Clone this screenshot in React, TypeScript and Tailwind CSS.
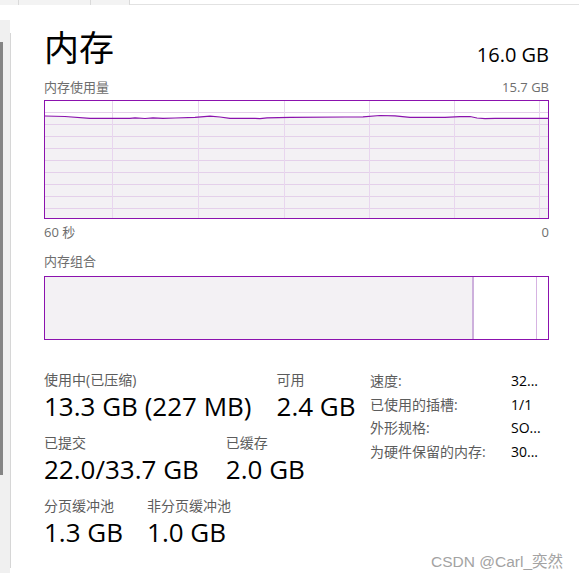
import React from "react";

const pts: [number, number][] = [
  [0, 15], [20, 15.5], [45, 17.3], [85, 17.3], [90, 16.8], [100, 17.5], [108, 16.8], [118, 17.3],
  [130, 17], [150, 16.3], [165, 15.2], [175, 16], [185, 17.3], [210, 17.3], [215, 17.6], [222, 16.8],
  [245, 16.3], [300, 16], [318, 15.8], [335, 14.5], [350, 14.8], [365, 16.3], [400, 16.3], [415, 15.7],
  [425, 15.5], [432, 17], [440, 17.6], [450, 17.3], [503, 17.3],
];

function Chart() {
  const W = 503;
  const H = 117;
  const line = pts.map((p, i) => `${i === 0 ? "M" : "L"}${p[0]} ${p[1]}`).join(" ");
  const area = `${line} L${W} ${H} L0 ${H} Z`;
  const hs = [11, 23, 35, 47, 59, 71, 83, 95, 107];
  const vs = [67, 153, 239, 324, 409, 494];
  return (
    <svg width={W} height={H} viewBox={`0 0 ${W} ${H}`} className="block">
      <rect x="0" y="0" width={W} height={H} fill="#ffffff" />
      <path d={area} fill="#f3f1f4" />
      {hs.map((y) => (
        <line key={y} x1="0" x2={W} y1={y + 0.5} y2={y + 0.5} stroke="#e4d0ea" strokeWidth="1" />
      ))}
      {vs.map((x) => (
        <line key={x} x1={x + 0.5} x2={x + 0.5} y1="0" y2={H} stroke="#e8d6ee" strokeWidth="1" />
      ))}
      <path d={line} fill="none" stroke="#8b12ae" strokeWidth="1.2" />
    </svg>
  );
}

export default function App() {
  return (
    <div className="relative w-[579px] h-[580px] bg-white overflow-hidden flex flex-col font-['Open_Sans','Noto_Sans_CJK_SC',sans-serif] text-black">
      <div className="flex h-[5px] shrink-0">
        <div className="w-[130px] bg-[#f3f3f3] flex">
          <div className="w-[19px] border-r border-[#dadada]" />
          <div className="w-[72px] border-r border-[#dadada]" />
          <div className="flex-1 border-r border-[#dadada]" />
        </div>
        <div className="flex-1 border-b border-[#e2e2e2]" />
      </div>
      <div className="flex flex-1">
        <div className="flex mt-[15px] h-[553px] shrink-0">
          <div className="w-[10px] bg-[#f0f0f0] pt-[22px]">
            <div className="w-[3px] h-[433px] bg-[#858585]" />
          </div>
          <div className="w-px mt-[13px] h-[535px] bg-[#d6d6d6]" />
        </div>
        <div className="flex-1 pl-[33px] pr-[30px] flex flex-col">
          <div className="flex justify-between items-start mt-[19px] h-[48px]">
            <div className="text-[35px] leading-[48px]">内存</div>
            <div className="text-[20px] leading-[24px] mt-[19px]">16.0 GB</div>
          </div>
          <div className="flex justify-between mt-[5px] h-[20px] text-[13px] leading-[20px] text-[#6e6e6e]">
            <span>内存使用量</span>
            <span>15.7 GB</span>
          </div>
          <div className="mt-[3px] w-[505px] h-[119px] border border-[#8b12ae]">
            <Chart />
          </div>
          <div className="flex justify-between mt-[3px] h-[20px] text-[13px] leading-[20px] text-[#6e6e6e]">
            <span>60 秒</span>
            <span>0</span>
          </div>
          <div className="mt-[9px] h-[20px] text-[13px] leading-[20px] text-[#6e6e6e]">内存组合</div>
          <div className="mt-[5px] w-[505px] h-[64px] border border-[#8b12ae] flex">
            <div className="w-[427px] bg-[#f3f1f4]" />
            <div className="w-[2px] bg-[#cdb0dc]" />
            <div className="w-[62px] bg-white" />
            <div className="w-px bg-[#d6b3e2]" />
            <div className="flex-1 bg-white" />
          </div>
          <div className="flex mt-[31px]">
            <div className="w-[326px] flex flex-col">
              <div className="flex gap-[25px]">
                <div className="flex flex-col">
                  <span className="text-[14px] leading-[18px] text-[#5c5c5c]">使用中(已压缩)</span>
                  <span className="text-[26px] leading-[34px]">13.3 GB (227 MB)</span>
                </div>
                <div className="flex flex-col">
                  <span className="text-[14px] leading-[18px] text-[#5c5c5c]">可用</span>
                  <span className="text-[26px] leading-[34px]">2.4 GB</span>
                </div>
              </div>
              <div className="flex gap-[27px] mt-[11px]">
                <div className="flex flex-col">
                  <span className="text-[14px] leading-[18px] text-[#5c5c5c]">已提交</span>
                  <span className="text-[26px] leading-[34px]">22.0/33.7 GB</span>
                </div>
                <div className="flex flex-col">
                  <span className="text-[14px] leading-[18px] text-[#5c5c5c]">已缓存</span>
                  <span className="text-[26px] leading-[34px]">2.0 GB</span>
                </div>
              </div>
              <div className="flex gap-[24px] mt-[11px]">
                <div className="flex flex-col">
                  <span className="text-[14px] leading-[18px] text-[#5c5c5c]">分页缓冲池</span>
                  <span className="text-[26px] leading-[34px]">1.3 GB</span>
                </div>
                <div className="flex flex-col">
                  <span className="text-[14px] leading-[18px] text-[#5c5c5c]">非分页缓冲池</span>
                  <span className="text-[26px] leading-[34px]">1.0 GB</span>
                </div>
              </div>
            </div>
            <div className="-mt-[2px] self-start grid grid-cols-[141px_1fr] auto-rows-[23.5px] text-[14px] leading-[23.5px]">
              <span className="text-[#5c5c5c]">速度:</span>
              <span>32...</span>
              <span className="text-[#5c5c5c]">已使用的插槽:</span>
              <span>1/1</span>
              <span className="text-[#5c5c5c]">外形规格:</span>
              <span>SO...</span>
              <span className="text-[#5c5c5c]">为硬件保留的内存:</span>
              <span>30...</span>
            </div>
          </div>
        </div>
      </div>
      <div className="absolute right-[16px] bottom-[8px] text-[15.5px] leading-[20px] text-[#a3a3a3] font-['Liberation_Sans','Noto_Sans_CJK_SC',sans-serif]">
        CSDN @Carl_奕然
      </div>
    </div>
  );
}
